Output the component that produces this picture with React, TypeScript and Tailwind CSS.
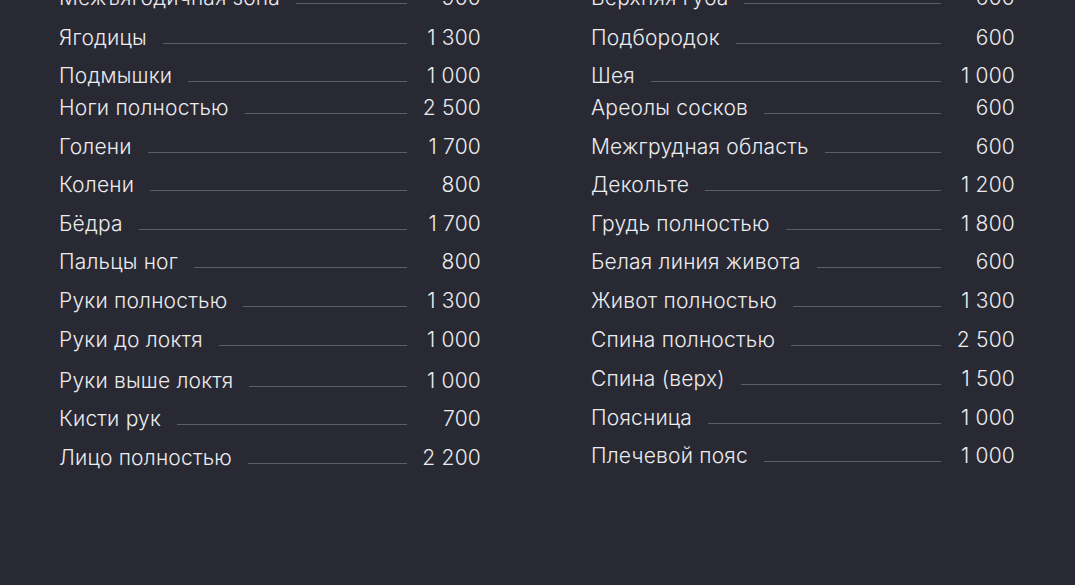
import React from "react";

type Row = { name: string; price: string; mt: string };

const left: Row[] = [
  { name: "Межъягодичная зона", price: "900", mt: "mt-0" },
  { name: "Ягодицы", price: "1 300", mt: "mt-[2px]" },
  { name: "Подмышки", price: "1 000", mt: "mt-0" },
  { name: "Ноги полностью", price: "2 500", mt: "-mt-[6px]" },
  { name: "Голени", price: "1 700", mt: "mt-[1px]" },
  { name: "Колени", price: "800", mt: "mt-0" },
  { name: "Бёдра", price: "1 700", mt: "mt-[1px]" },
  { name: "Пальцы ног", price: "800", mt: "mt-0" },
  { name: "Руки полностью", price: "1 300", mt: "mt-[1px]" },
  { name: "Руки до локтя", price: "1 000", mt: "mt-[1px]" },
  { name: "Руки выше локтя", price: "1 000", mt: "mt-[3px]" },
  { name: "Кисти рук", price: "700", mt: "mt-0" },
  { name: "Лицо полностью", price: "2 200", mt: "mt-[1px]" },
];

const right: Row[] = [
  { name: "Верхняя губа", price: "600", mt: "mt-0" },
  { name: "Подбородок", price: "600", mt: "mt-[2px]" },
  { name: "Шея", price: "1 000", mt: "mt-0" },
  { name: "Ареолы сосков", price: "600", mt: "-mt-[6px]" },
  { name: "Межгрудная область", price: "600", mt: "mt-[1px]" },
  { name: "Декольте", price: "1 200", mt: "mt-0" },
  { name: "Грудь полностью", price: "1 800", mt: "mt-[1px]" },
  { name: "Белая линия живота", price: "600", mt: "mt-0" },
  { name: "Живот полностью", price: "1 300", mt: "mt-[1px]" },
  { name: "Спина полностью", price: "2 500", mt: "mt-[1px]" },
  { name: "Спина (верх)", price: "1 500", mt: "mt-[1px]" },
  { name: "Поясница", price: "1 000", mt: "mt-[1px]" },
  { name: "Плечевой пояс", price: "1 000", mt: "mt-0" },
];

function PriceRow({ row }: { row: Row }) {
  return (
    <div className={`flex h-[38px] items-center ${row.mt}`}>
      <span className="whitespace-nowrap">{row.name}</span>
      <div className="ml-[16px] mt-[13px] h-px flex-1 bg-[#5d5d68]" />
      <span className="w-[74px] shrink-0 whitespace-nowrap text-right">{row.price}</span>
    </div>
  );
}

export default function App() {
  return (
    <div
      className="h-[585px] w-[1075px] overflow-hidden bg-[#292933] text-[21px] font-light leading-none tracking-[0.2px] text-[#ececef]"
      style={{ fontFamily: "Inter, 'Noto Sans', sans-serif" }}
    >
      <div className="-mt-[22px] flex gap-[110px] pl-[59px]">
        <div className="flex w-[422px] flex-col">
          {left.map((r) => (
            <PriceRow key={r.name} row={r} />
          ))}
        </div>
        <div className="flex w-[424px] flex-col">
          {right.map((r) => (
            <PriceRow key={r.name} row={r} />
          ))}
        </div>
      </div>
    </div>
  );
}
